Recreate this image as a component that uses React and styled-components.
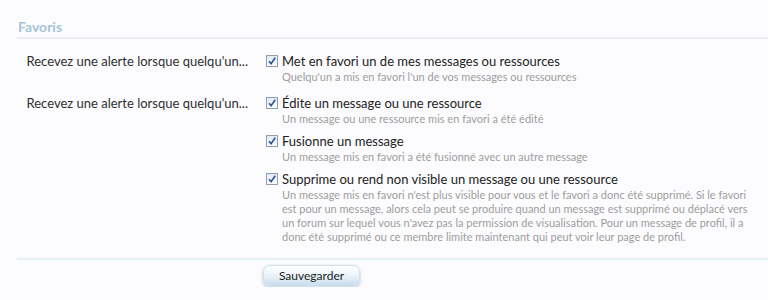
import styled, { createGlobalStyle } from "styled-components";

const GlobalStyle = createGlobalStyle`
  body {
    margin: 0;
    background: #fcfcfe;
    font-family: Lato, "Liberation Sans", sans-serif;
    color: #333;
  }
`;

const groups = [
  {
    label: "Recevez une alerte lorsque quelqu'un...",
    options: [
      {
        title: "Met en favori un de mes messages ou ressources",
        hint: ["Quelqu'un a mis en favori l'un de vos messages ou ressources"],
      },
    ],
  },
  {
    label: "Recevez une alerte lorsque quelqu'un...",
    options: [
      {
        title: "Édite un message ou une ressource",
        hint: ["Un message ou une ressource mis en favori a été édité"],
      },
      {
        title: "Fusionne un message",
        hint: ["Un message mis en favori a été fusionné avec un autre message"],
      },
      {
        title: "Supprime ou rend non visible un message ou une ressource",
        hint: [
          "Un message mis en favori n'est plus visible pour vous et le favori a donc été supprimé. Si le favori",
          "est pour un message, alors cela peut se produire quand un message est supprimé ou déplacé vers",
          "un forum sur lequel vous n'avez pas la permission de visualisation. Pour un message de profil, il a",
          "donc été supprimé ou ce membre limite maintenant qui peut voir leur page de profil.",
        ],
      },
    ],
  },
];

const Check = () => (
  <Box>
    <svg width="10" height="10" viewBox="0 0 10 10">
      <path d="M2 5.2 L4.1 7.6 L8.2 1.8" fill="none" stroke="#30509c" strokeWidth="1.6" />
    </svg>
  </Box>
);

export default function App() {
  return (
    <>
      <GlobalStyle />
      <Section>
        <Heading>Favoris</Heading>
        <Form>
          {groups.map((g, i) => (
            <Group key={i}>
              <Label>{g.label}</Label>
              <Options>
                {g.options.map((o) => (
                  <Option key={o.title}>
                    <Check />
                    <div>
                      <Title>{o.title}</Title>
                      <Hint>
                        {o.hint.map((line, j) => (
                          <span key={j}>
                            {line}
                            {j < o.hint.length - 1 && <br />}
                          </span>
                        ))}
                      </Hint>
                    </div>
                  </Option>
                ))}
              </Options>
            </Group>
          ))}
        </Form>
        <Footer>
          <Button>Sauvegarder</Button>
        </Footer>
      </Section>
    </>
  );
}

const Section = styled.div`
  margin-left: 17px;
  padding-top: 17px;
`;

const Heading = styled.h3`
  margin: 0;
  padding-left: 1px;
  font-size: 14px;
  font-weight: bold;
  line-height: 20px;
  color: #a5c5db;
  border-bottom: 2px solid #eceef5;
`;

const Form = styled.div`
  display: flex;
  flex-direction: column;
  gap: 11px;
  padding: 14px 0 14px;
  border-bottom: 2px solid #e6eff6;
`;

const Group = styled.div`
  display: grid;
  grid-template-columns: 231px 1fr;
  column-gap: 18px;
`;

const Label = styled.div`
  font-size: 13px;
  line-height: 16px;
  white-space: nowrap;
  text-align: right;
  color: #2e2e2e;
`;

const Options = styled.div`
  display: flex;
  flex-direction: column;
  gap: 7px;
`;

const Option = styled.div`
  display: flex;
  gap: 4px;
  align-items: flex-start;
`;

const Box = styled.span`
  flex: none;
  width: 10px;
  height: 10px;
  margin-top: 2px;
  border: 1px solid #8e9fb4;
  background: linear-gradient(#e3e9f1, #fbfcfd);
  display: flex;
  align-items: center;
  justify-content: center;
`;

const Title = styled.div`
  font-size: 13px;
  line-height: 16px;
  color: #222;
`;

const Hint = styled.div`
  margin-top: 1px;
  font-size: 11px;
  line-height: 14px;
  white-space: nowrap;
  color: #9c9c9c;
`;

const Footer = styled.div`
  padding: 4px 0 0 246px;
`;

const Button = styled.button`
  width: 97px;
  height: 22px;
  border: 1px solid #d3e1ec;
  border-radius: 7px;
  background: linear-gradient(#ffffff, #eaf2f8 50%, #c6dcec);
  box-shadow: 0 1px 3px rgba(90, 120, 150, 0.45);
  font-family: Lato, "Liberation Sans", sans-serif;
  font-size: 12px;
  color: #222;
  padding: 0;
`;
